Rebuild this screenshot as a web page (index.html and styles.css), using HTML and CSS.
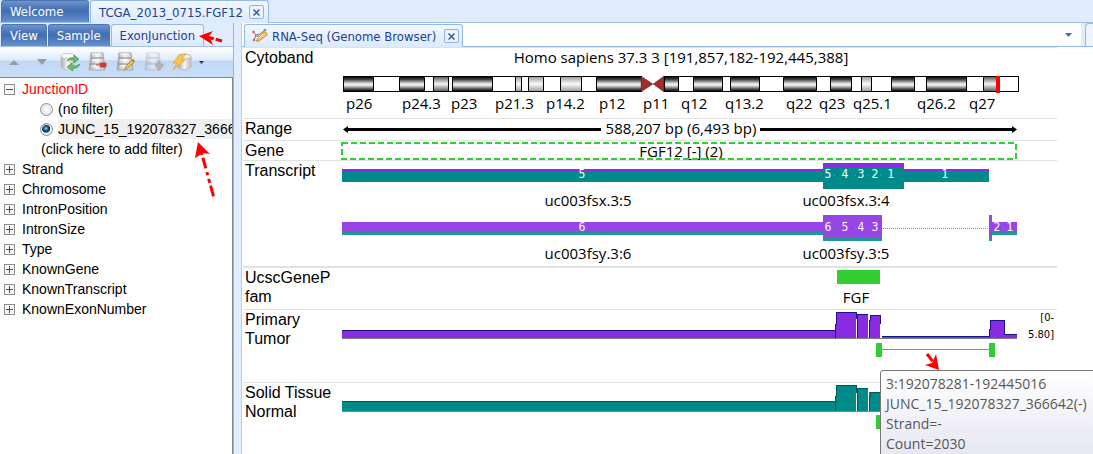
FILE: index.html
```html
<!DOCTYPE html>
<html lang="en">
<head>
<meta charset="utf-8">
<title>TCGA_2013_0715.FGF12</title>
<link rel="stylesheet" href="styles.css">
</head>
<body>
<div class="app">
  <nav class="tabs main-tabs">
    <button class="tab tab-dark welcome">Welcome</button>
    <div class="tab tab-light project"><button class="tab-label">TCGA_2013_0715.FGF12</button><button class="close" aria-label="Close project"><svg width="7" height="7" viewBox="0 0 7 7"><path d="M.5 .5L6.500 6.500M6.500 .5L.5 6.500"/></svg></button></div>
  </nav>
  <div class="workspace">
    <aside class="side">
      <nav class="tabs side-tabs">
        <button class="tab tab-dark">View</button>
        <button class="tab tab-dark">Sample</button>
        <button class="tab tab-light">ExonJunction</button>
      </nav>
      <div class="toolbar">
        <button aria-label="Move up"><svg width="20" height="20" viewBox="0 0 20 20"><path d="M5 13L10 8L15 13Z" fill="#999ba0"/></svg></button>
        <button aria-label="Move down"><svg width="20" height="20" viewBox="0 0 20 20"><path d="M5 7H15L10 13Z" fill="#999ba0"/></svg></button>
        <button aria-label="Refresh"><svg width="20" height="20" viewBox="0 0 20 20"><path d="M1 4V15C2 18 11 19 14 16V4Z" fill="url(#silver)" stroke="#c3c5c7"/><ellipse cx="7.500" cy="4" rx="6.500" ry="2.500" fill="#fafafa" stroke="#ccc"/><path d="M7 9Q9 5 14 6V3L19 7L14 11V8Q10 7 7 9ZM20 12Q18 17 13 16V19L7 15L12 11V14Q16 15 20 12Z" fill="#6bbd6d" stroke="#429c4c" stroke-width=".7"/></svg></button>
        <button aria-label="Remove filter"><svg width="20" height="20" viewBox="0 0 20 20"><g id="cabinet"><path d="M3 1H15L17 18H1Z" fill="url(#silver)" stroke="#aaa"/><path d="M3 6H15M2 12H16" stroke="#888" stroke-width="1.200"/><path d="M4 2H13M4 8H13M4 14H13" stroke="#fff"/></g><path d="M8 13H11M12 11H18V15H12Z" fill="#dc3434" stroke="#cd4040"/></svg></button>
        <button aria-label="Edit filter"><svg width="20" height="20" viewBox="0 0 20 20"><use href="#cabinet"/><path d="M8 18L10 14L16 8L18 10L12 16Z" fill="#edc546" stroke="#8a7740" stroke-width=".7"/><path d="M16 8L17 7L19 9L18 10Z" fill="#c8524d"/></svg></button>
        <button aria-label="Add filter" disabled><svg width="20" height="20" viewBox="0 0 20 20"><use href="#cabinet" opacity=".45"/><path d="M12 12H14V9H16V12H19V15H16V18H14V15H12Z" fill="#b2b6ba" stroke="#aaa"/></svg></button>
        <button aria-label="Run"><svg width="20" height="20" viewBox="0 0 20 20"><path d="M6 5V16Q13 20 19 15V5Z" fill="url(#silver)" stroke="#bbb"/><ellipse cx="12.500" cy="4.500" rx="6.500" ry="2.500" fill="#eee" stroke="#bbb"/><path d="M7 3L14 2L9 8H13L1 18L5 11H1Z" fill="#f5ca52" stroke="#d99f31" stroke-width=".7"/></svg></button>
        <button class="more" aria-label="More"><svg width="5" height="3" viewBox="0 0 5 3"><path d="M0 0H5L2.500 3Z" fill="#123a7e"/></svg></button>
      </div>
      <ul class="tree">
        <li><button class="toggle open" aria-label="Collapse"></button><span class="hot">JunctionID</span>
          <ul class="choices">
            <li><label><input type="radio" name="junction"><span>(no filter)</span></label></li>
            <li><label><input type="radio" name="junction" checked><span class="picked">JUNC_15_192078327_3666</span></label></li>
            <li><button class="add">(click here to add filter)</button></li>
          </ul>
        </li>
        <li><button class="toggle" aria-label="Expand"></button><span>Strand</span></li>
        <li><button class="toggle" aria-label="Expand"></button><span>Chromosome</span></li>
        <li><button class="toggle" aria-label="Expand"></button><span>IntronPosition</span></li>
        <li><button class="toggle" aria-label="Expand"></button><span>IntronSize</span></li>
        <li><button class="toggle" aria-label="Expand"></button><span>Type</span></li>
        <li><button class="toggle" aria-label="Expand"></button><span>KnownGene</span></li>
        <li><button class="toggle" aria-label="Expand"></button><span>KnownTranscript</span></li>
        <li><button class="toggle" aria-label="Expand"></button><span>KnownExonNumber</span></li>
      </ul>
    </aside>
    <main class="view">
      <nav class="view-tabs">
        <div class="tab tab-light browser-tab"><svg width="16" height="16" viewBox="0 0 16 16"><path d="M1 4L4 7L2 12M4 7L8 6L13 2M3 8L7 8" fill="none" stroke="#777b83"/><path d="M4 13L11 4Q15 3 15 7L7 13Z" fill="#f2c85d" stroke="#c98c34"/><path d="M7 10L11 6" stroke="#fff3bd"/><circle cx="1.500" cy="4" r="1.300" fill="#dc6258"/><circle cx="2" cy="12" r="1.300" fill="#dc6258"/><circle cx="13" cy="2" r="1.300" fill="#888ebd"/></svg><button class="tab-label">RNA-Seq (Genome Browser)</button><button class="close" aria-label="Close browser"><svg width="7" height="7" viewBox="0 0 7 7"><path d="M.5 .5L6.500 6.500M6.500 .5L.5 6.500"/></svg></button></div>
        <button class="tab-menu" aria-label="Tab list"><svg width="7" height="4" viewBox="0 0 7 4"><path d="M0 0H7L3.500 4Z" fill="#376dbc"/></svg></button>
        <span class="next-pane"><span class="next-tab"></span></span>
      </nav>
      <div class="tracks">
        <section class="track cyto"><h2>Cytoband</h2>
          <svg class="plot" viewBox="340 48 717 70" preserveAspectRatio="xMinYMin meet">
            <defs>
              <linearGradient id="dark" x2="0" y2="1"><stop stop-color="#000"/><stop offset=".2" stop-color="#444"/><stop offset=".5" stop-color="#f2f2f2"/><stop offset=".62" stop-color="#ddd"/><stop offset=".85" stop-color="#444"/><stop offset="1" stop-color="#000"/></linearGradient>
              <linearGradient id="mid" x2="0" y2="1"><stop stop-color="#555"/><stop offset=".5" stop-color="#f4f4f4"/><stop offset="1" stop-color="#555"/></linearGradient>
              <linearGradient id="pale" x2="0" y2="1"><stop stop-color="#999"/><stop offset=".5" stop-color="#fafafa"/><stop offset="1" stop-color="#999"/></linearGradient>
              <linearGradient id="silver"><stop stop-color="#aaa"/><stop offset=".5" stop-color="#f4f4f4"/><stop offset="1" stop-color="#bbb"/></linearGradient>
            </defs>
            <text x="681" y="63" text-anchor="middle">Homo sapiens 37.3 3 [191,857,182-192,445,388]</text>
            <g stroke="#000" shape-rendering="crispEdges">
              <path d="M343.500 76.500H641.500V91.500H343.500ZM664.500 76.500H1018.500V91.500H664.500Z" fill="#fff"/>
              <g fill="url(#dark)">
                <rect x="343.500" y="76.500" width="30" height="15"/><rect x="399.500" y="76.500" width="25" height="15"/><rect x="452.500" y="76.500" width="40" height="15"/><rect x="596.500" y="76.500" width="45" height="15"/><rect x="664.500" y="76.500" width="14" height="15"/><rect x="693.500" y="76.500" width="29" height="15"/><rect x="730.500" y="76.500" width="29" height="15"/><rect x="783.500" y="76.500" width="33" height="15"/><rect x="830.500" y="76.500" width="21" height="15"/><rect x="891.500" y="76.500" width="23" height="15"/><rect x="926.500" y="76.500" width="40" height="15"/>
              </g>
              <g fill="url(#mid)"><rect x="433.500" y="76.500" width="15" height="15"/><rect x="983.500" y="76.500" width="14" height="15"/></g>
              <g fill="url(#pale)"><rect x="515.500" y="76.500" width="6" height="15"/><rect x="528.500" y="76.500" width="15" height="15"/><rect x="560.500" y="76.500" width="21" height="15"/><rect x="861.500" y="76.500" width="10" height="15"/></g>
            </g>
            <path d="M641 76L653 84L641 92ZM664 76L653 84L664 92Z" fill="#a52a2a" stroke="#000" stroke-width=".5" stroke-dasharray="1 1"/>
            <path d="M996 76H1000V93H996Z" fill="red"/>
            <text x="346" y="109">p26</text><text x="402" y="109">p24.3</text><text x="451" y="109">p23</text><text x="495" y="109">p21.3</text><text x="546" y="109">p14.2</text><text x="599" y="109">p12</text><text x="643" y="109">p11</text><text x="681" y="109">q12</text><text x="725" y="109">q13.2</text><text x="786" y="109">q22</text><text x="819" y="109">q23</text><text x="853" y="109">q25.1</text><text x="917" y="109">q26.2</text><text x="969" y="109">q27</text>
          </svg>
        </section>
        <section class="track range"><h2>Range</h2>
          <svg class="plot" viewBox="340 119 717 21" preserveAspectRatio="xMinYMin meet"><path d="M346 129.500H601M760 129.500H1014" stroke="#000" stroke-width="3"/><path d="M343 129.500L348 126V133ZM1017 129.500L1012 126V133Z"/><text x="681" y="134" text-anchor="middle">588,207 bp (6,493 bp)</text></svg>
        </section>
        <section class="track gene"><h2>Gene</h2>
          <svg class="plot" viewBox="340 141 717 19" preserveAspectRatio="xMinYMin meet"><text x="681" y="157" text-anchor="middle">FGF12 [-] (2)</text><rect x="342" y="143" width="674" height="16" fill="none" stroke="#32cd32" stroke-width="2" stroke-dasharray="6 3"/></svg>
        </section>
        <section class="track transcript"><h2>Transcript</h2>
          <svg class="plot" viewBox="340 161 717 104" preserveAspectRatio="xMinYMin meet">
            <g shape-rendering="crispEdges">
              <path d="M342 169H823V163H904V169H989V182H342Z" fill="#8a2be2"/>
              <path d="M342 171H823V167H904V171H989V182H904V189H823V182H342Z" fill="#008b8b"/>
              <path d="M342 222H823V215H882V241H823V235H342ZM989 215H992V222H1017V235H992V241H989Z" fill="#229797"/>
              <path d="M342 222H823V215H882V237H823V232H342ZM989 215H992V222H1017V232H992V237H989Z" fill="#9845e6"/>
              <path d="M883 228.500H988" stroke="#32cd32" stroke-dasharray="1 1"/>
              <path d="M834 175.500H835M855 175.500H856M867 175.500H868M880 175.500H881M834 228.500H835M855 228.500H856M867 228.500H868M1003 228.500H1004" stroke="#32cd32"/>
            </g>
            <g class="exon"><text x="582" y="178">5</text><text x="828" y="178">5</text><text x="845" y="178">4</text><text x="861" y="178">3</text><text x="875" y="178">2</text><text x="891" y="178">1</text><text x="945" y="178">1</text><text x="582" y="231">6</text><text x="828" y="231">6</text><text x="845" y="231">5</text><text x="861" y="231">4</text><text x="875" y="231">3</text><text x="997" y="231">2</text><text x="1010" y="231">1</text></g>
            <g text-anchor="middle"><text x="588" y="206">uc003fsx.3:5</text><text x="846" y="206">uc003fsx.3:4</text><text x="588" y="259">uc003fsy.3:6</text><text x="846" y="259">uc003fsy.3:5</text></g>
          </svg>
        </section>
        <section class="track pfam"><h2>UcscGeneP<wbr>fam</h2>
          <svg class="plot" viewBox="340 268 717 41" preserveAspectRatio="xMinYMin meet"><path d="M837 270H880V284H837Z" fill="#32cd32"/><text x="856" y="303" text-anchor="middle">FGF</text></svg>
        </section>
        <section class="track tumor"><h2>Primary Tumor</h2>
          <svg class="plot" viewBox="340 310 717 72" preserveAspectRatio="xMinYMin meet">
            <g shape-rendering="crispEdges">
              <path d="M342 338V330H835V324H836V312H856V338ZM857 338V314H868V338ZM869 338V320H870V315H880V338ZM882 338V336H989V329H990V320H1005V334H1017V338Z" fill="#8a2be2"/>
              <path d="M342 330.500H835.500V324.500H836.500V312.500H856.500V318.500H857.500V314.500H868M869.500 338V320.500H870.500V315.500H880.500V324M882 336.500H989.500V329.500H990.500V320.500H1004.500V334.500H1017M857.500 318V338M835.500 324V338" fill="none" stroke="#151594"/>
              <path d="M342 338.500H1017" stroke="#808080"/>
              <path d="M876 343H882V357H876ZM989 343H995V357H989ZM882 349H989V350H882Z" fill="#32cd32"/>
            </g>
            <g class="scale"><text x="1054" y="321">[0-</text><text x="1054" y="338">5.80]</text></g>
          </svg>
        </section>
        <section class="track normal"><h2>Solid Tissue Normal</h2>
          <svg class="plot" viewBox="340 383 717 71" preserveAspectRatio="xMinYMin meet">
            <g shape-rendering="crispEdges">
              <path d="M342 411V401H835V396H836V385H856V411ZM857 411V388H868V411ZM869 411V392H882V411Z" fill="#008b8b"/>
              <path d="M342 401.500H835.500V396.500H836.500V385.500H856.500V392.500H857.500V388.500H868M869.500 411V396.500H870.500V392.500H882M857.500 392V411M835.500 396V411" fill="none" stroke="#00595d"/>
              <path d="M342 411.500H1017" stroke="#808080"/><path d="M876 415H882V429H876Z" fill="#32cd32"/>
            </g>
          </svg>
        </section>
      </div>
    </main>
  </div>
  <div class="tooltip" role="tooltip"><span>3:192078281-192445016</span><span>JUNC_15_192078327_366642(-)</span><span>Strand=-</span><span>Count=2030</span></div>
  <svg class="callout callout-tab" width="26" height="18" viewBox="198 28 26 18"><path d="M199 36L213 31L209 36L213 45Z"/><path d="M207 37L222 41" stroke-dasharray="7 2 10"/></svg>
  <svg class="callout callout-filter" width="24" height="60" viewBox="193 140 24 60"><path d="M198 142L210 154L203 153L195 158Z"/><path d="M201 151L214 198" stroke-dasharray="4 3 11 4 3 4"/></svg>
  <svg class="callout callout-junction" width="20" height="20" viewBox="923 352 20 20"><path d="M939 370L925 365L932 363L936 354Z"/><path d="M927 354L934 363" stroke-dasharray="9 2"/></svg>
</div>
</body>
</html>
```
FILE: styles.css
```css
* { box-sizing: border-box; }
body { margin: 0; font-family: "Liberation Sans", Arial, sans-serif; font-size: 14px; background: #fff; color: #000; }
button { font: inherit; color: inherit; border: 0; background: none; padding: 0; margin: 0; }
ul { list-style: none; margin: 0; padding: 0; }
.app { position: relative; min-height: 100vh; display: flex; flex-direction: column; overflow: hidden; }
.tabs { display: flex; align-items: flex-end; gap: 1px; background: #e1edfe; }
.tab { display: flex; align-items: center; height: 22px; padding: 0 8px; border: 1px solid #94b9e8; border-bottom: 0; border-radius: 3px 3px 0 0; font-family: "DejaVu Sans Condensed", "DejaVu Sans", sans-serif; font-size: 13px; white-space: nowrap; }
.tab-dark { color: #fff; background: linear-gradient(#7094cb, #416db2 45%, #4672b7 55%, #6791ce); border-color: #4b76b6; }
.tab-light { color: #1e4191; background: linear-gradient(#f2f7ff, #dceaff); }
.main-tabs { height: 23px; border-bottom: 1px solid #9dbde9; padding-left: 1px; }
.welcome { width: 88px; }
.project { gap: 6px; padding-right: 4px; margin-bottom: -1px; height: 23px; }
.close { width: 15px; height: 14px; border: 1px solid #8fb2e1; border-radius: 2px; display: grid; place-items: center; background: #edf4ff; }
.close path { stroke: #315b9f; stroke-width: 1.5; }
.workspace { flex: 1; display: grid; grid-template-columns: 234px minmax(0, 1fr); column-gap: 7px; background: #e1edfe; }
.side { min-width: 0; border-right: 1px solid #94b6e6; display: flex; flex-direction: column; }
.side-tabs { height: 23px; padding-left: 1px; }
.toolbar { height: 32px; border-top: 1px solid #a2bfe8; border-bottom: 1px solid #7d8797; background: linear-gradient(#fff, #dfeafa 44%, #c1d8f5 46%, #c8ddf8); display: flex; align-items: center; gap: 8px; padding-left: 4px; }
.toolbar button { display: flex; }
.toolbar .more { margin-left: -1px; }
.tree { flex: 1; background: #fff; border-right: 1px solid #7d8797; padding: 1px 0 0 4px; line-height: 20px; overflow: hidden; }
.toggle { width: 11px; height: 11px; margin-right: 7px; border: 1px solid #8d8d8d; vertical-align: 0; background: linear-gradient(#304f9b, #304f9b) center / 7px 1px no-repeat, linear-gradient(#304f9b, #304f9b) center / 1px 7px no-repeat, #f8f8f8; }
.toggle.open { background: linear-gradient(#304f9b, #304f9b) center / 7px 1px no-repeat, #f8f8f8; }
.hot { color: red; }
.choices { padding-left: 36px; }
.choices label { display: flex; align-items: center; gap: 5px; height: 20px; }
.choices input { appearance: none; flex: none; width: 13px; height: 13px; margin: 0; border: 1px solid #8b8f94; border-radius: 50%; background: radial-gradient(#fff, #d3d6da); box-shadow: inset 0 0 0 1px #eee; }
.choices input:checked { background: radial-gradient(circle at 45% 40%, #8de4ff, #155b82 25%, #0b2a46 42%, #eee 52%); }
.choices .picked { background: #f0f0f0; flex: 1; min-width: 0; overflow: hidden; white-space: nowrap; }
.add { display: block; height: 20px; margin-left: 1px; }
.view { min-width: 0; background: #fff; border-left: 1px solid #b3cff4; display: flex; flex-direction: column; }
.view-tabs { height: 24px; border-bottom: 1px solid #94b9e8; display: flex; align-items: flex-end; padding-left: 2px; }
.browser-tab { gap: 4px; padding: 0 3px 0 7px; height: 23px; margin-bottom: -1px; }
.browser-tab .close { margin-left: 4px; }
.tab-menu { margin-left: auto; margin-right: 9px; align-self: center; display: flex; }
.next-pane { width: 12px; height: 23px; background: #e1edfe; padding-left: 4px; }
.next-tab { display: block; height: 23px; border: solid #94b9e8; border-width: 1px 0 0 1px; border-radius: 4px 0 0; background: #edf4ff; }
.tracks { margin: 0 36px 0 1px; }
.track { display: grid; grid-template-columns: 97px minmax(0, 1fr); border-top: 1px solid #e1e1e1; }
.track h2 { margin: 0; padding: 0 0 0 2px; font-size: 16px; line-height: 19px; font-weight: 400; }
.plot { display: block; width: 100%; font-family: "Open Sans", "Noto Sans", sans-serif; font-size: 15px; }
.cyto .plot { height: 70px; }
.range .plot { height: 21px; }
.gene .plot { height: 19px; }
.transcript { border-bottom: 1px solid #e1e1e1; }
.transcript .plot { height: 105px; }
.pfam .plot { height: 41px; }
.tumor .plot { height: 72px; }
.normal .plot { height: 71px; }
.exon { fill: #fff; text-anchor: middle; font-family: "DejaVu Sans Condensed", "DejaVu Sans", sans-serif; font-size: 12px; }
.scale { text-anchor: end; font-family: "DejaVu Sans Condensed", "DejaVu Sans", sans-serif; font-size: 11px; }
.tooltip { position: absolute; left: 880px; top: 370px; width: 220px; height: 90px; padding: 3px 5px; border: 1px solid #767676; border-radius: 3px; background: linear-gradient(#fff, #e5e6f0); color: #575757; display: flex; flex-direction: column; font-family: "Open Sans", "Noto Sans", sans-serif; font-size: 14px; line-height: 20px; white-space: nowrap; }
.callout { position: absolute; fill: red; stroke: red; stroke-width: 0; }
.callout path + path { stroke-width: 3; fill: none; }
.callout-tab { left: 198px; top: 28px; }
.callout-filter { left: 193px; top: 140px; }
.callout-junction { left: 923px; top: 352px; }
```
